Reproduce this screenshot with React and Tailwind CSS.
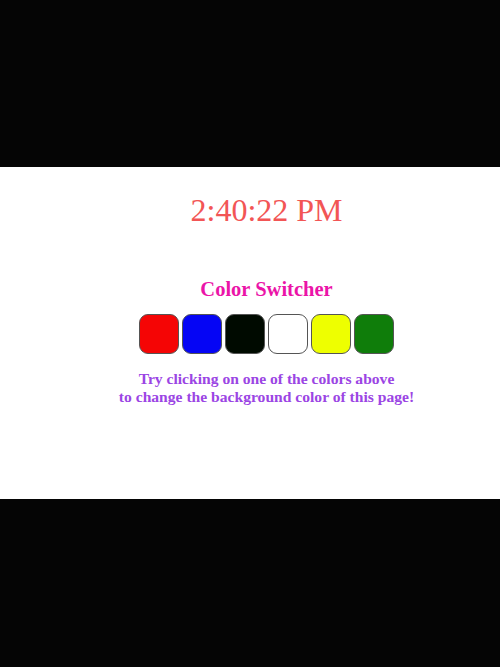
import React, { useState } from 'react';

const COLORS = [
  { name: 'red', value: '#f50505' },
  { name: 'blue', value: '#0505f5' },
  { name: 'black', value: '#000a00' },
  { name: 'white', value: '#ffffff' },
  { name: 'yellow', value: '#eeff00' },
  { name: 'green', value: '#0f7d0a' },
];

const App = () => {
  const [bg, setBg] = useState('#ffffff');

  return (
    <div className="min-h-[667px] flex flex-col bg-black" style={{ fontFamily: '"Liberation Serif", "Times New Roman", serif' }}>
      <div className="h-[167px] bg-[#050505]" />
      <div className="h-[332px] pl-[33px] flex flex-col items-center" style={{ backgroundColor: bg }}>
        <p className="pt-[26px] text-[32px] leading-[34px] text-[#f25555]">2:40:22 PM</p>
        <h2 className="mt-[51px] text-[20.5px] leading-[23px] font-bold text-[#eb14a8]">Color Switcher</h2>
        <div className="mt-[13px] flex gap-[3px]">
          {COLORS.map((c) => (
            <button
              key={c.name}
              onClick={() => setBg(c.value)}
              className="w-10 h-10 rounded-[9px] border border-[#555]"
              style={{ backgroundColor: c.value }}
            />
          ))}
        </div>
        <p className="mt-[16px] text-[15.6px] leading-[18px] font-bold text-center text-[#9b45e4]">
          Try clicking on one of the colors above
          <br />
          to change the background color of this page!
        </p>
      </div>
      <div className="flex-1 bg-[#050505]" />
    </div>
  );
};

export default App;
